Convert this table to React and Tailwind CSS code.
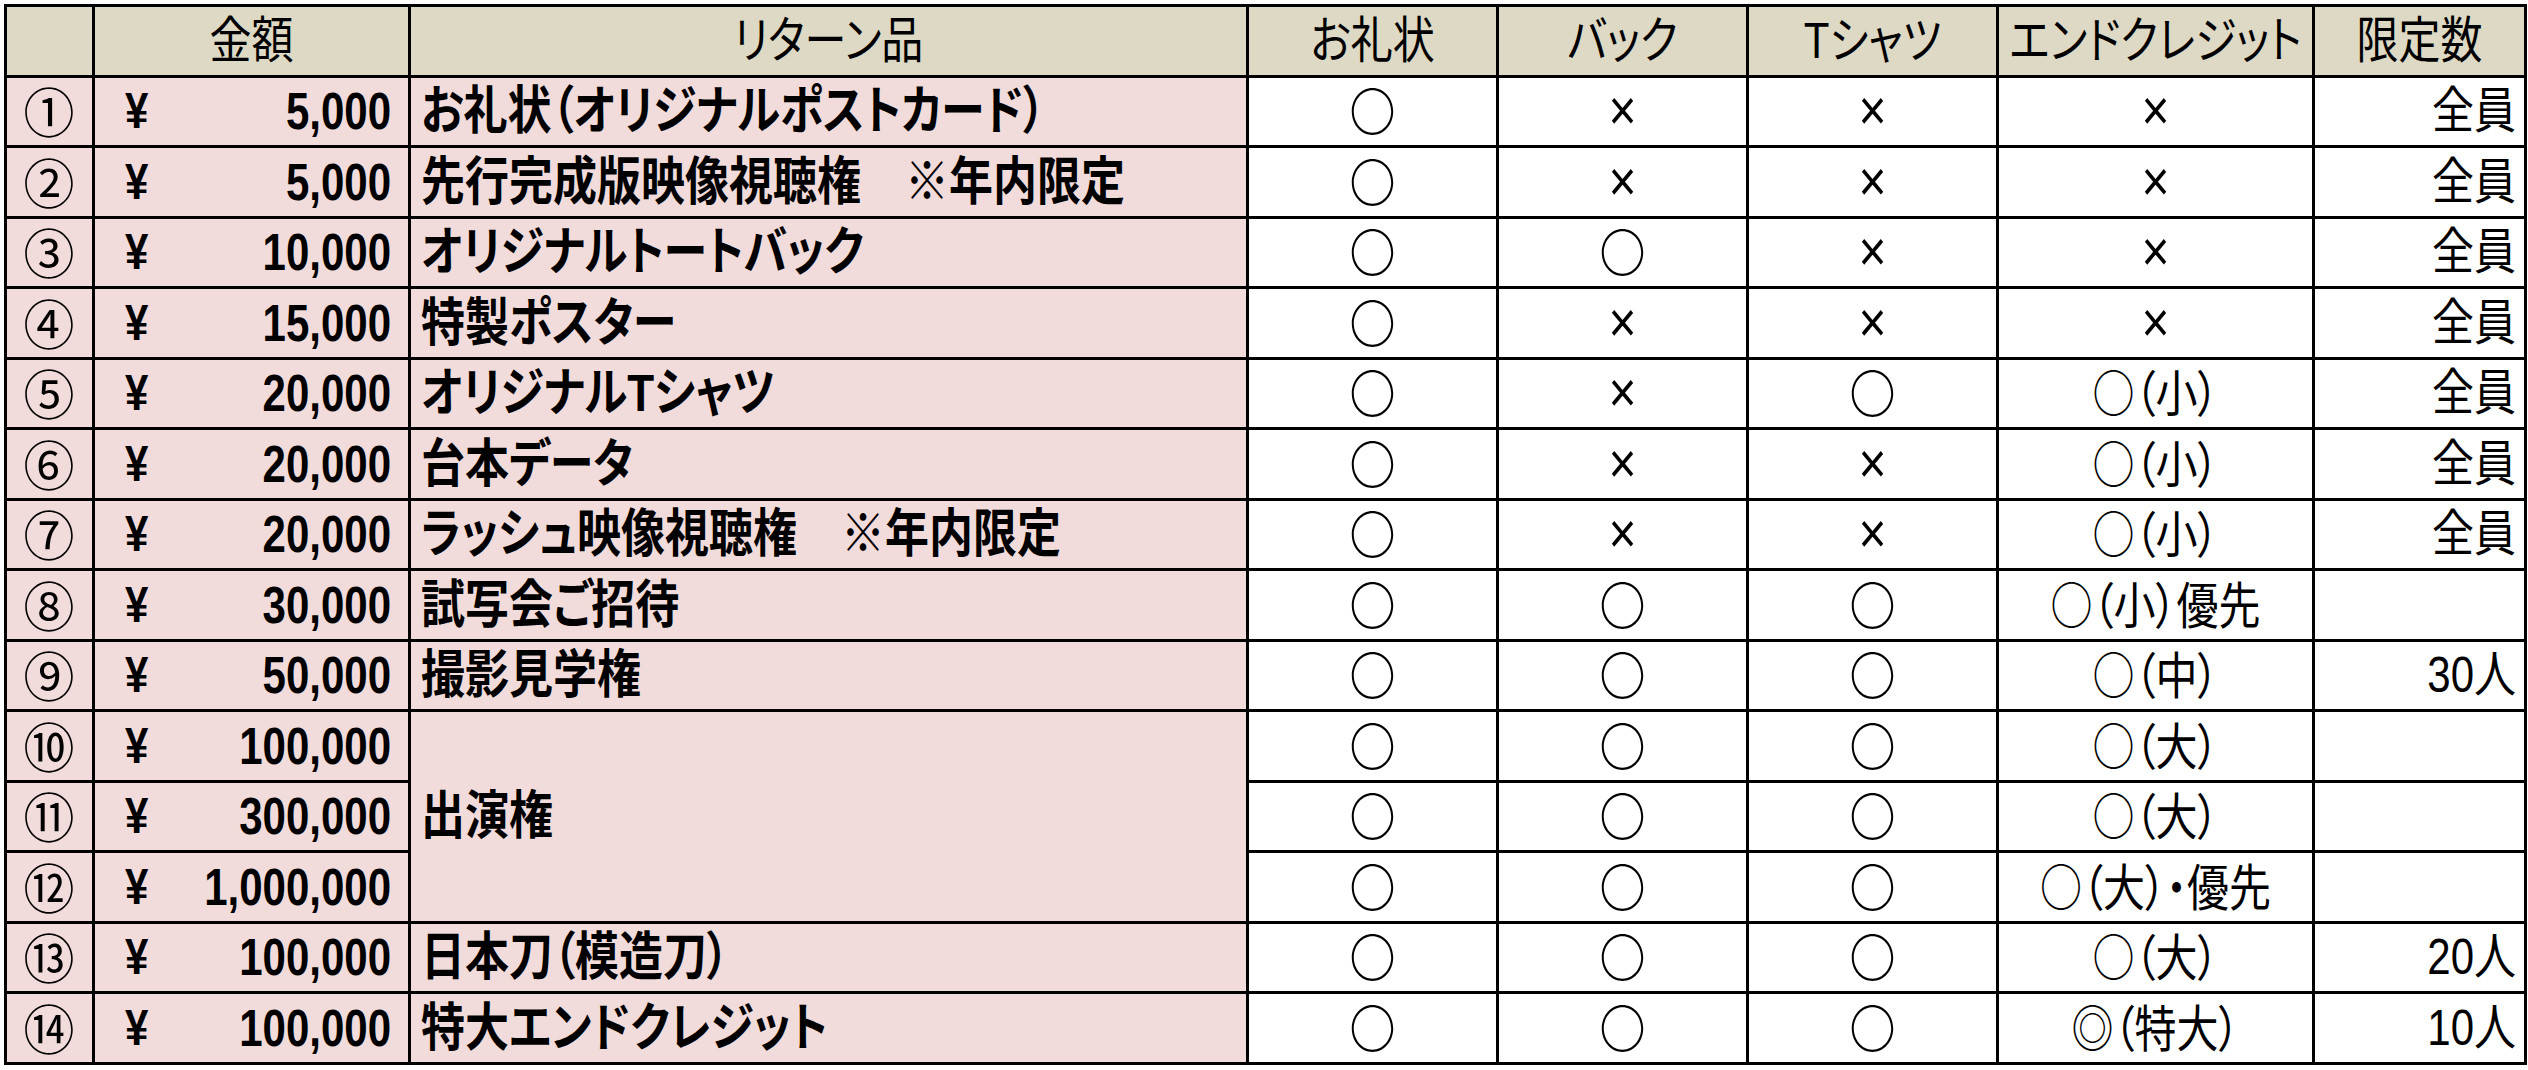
import React from 'react';

const HEADERS = ['', '金額', 'リターン品', 'お礼状', 'バック', 'Tシャツ', 'エンドクレジット', '限定数'];

const ROWS = [
  { no: '①', amount: '5,000', item: 'お礼状（オリジナルポストカード）', card: '○', bag: '×', shirt: '×', credit: '×', limit: '全員' },
  { no: '②', amount: '5,000', item: '先行完成版映像視聴権　※年内限定', card: '○', bag: '×', shirt: '×', credit: '×', limit: '全員' },
  { no: '③', amount: '10,000', item: 'オリジナルトートバック', card: '○', bag: '○', shirt: '×', credit: '×', limit: '全員' },
  { no: '④', amount: '15,000', item: '特製ポスター', card: '○', bag: '×', shirt: '×', credit: '×', limit: '全員' },
  { no: '⑤', amount: '20,000', item: 'オリジナルTシャツ', card: '○', bag: '×', shirt: '○', credit: '○（小）', limit: '全員' },
  { no: '⑥', amount: '20,000', item: '台本データ', card: '○', bag: '×', shirt: '×', credit: '○（小）', limit: '全員' },
  { no: '⑦', amount: '20,000', item: 'ラッシュ映像視聴権　※年内限定', card: '○', bag: '×', shirt: '×', credit: '○（小）', limit: '全員' },
  { no: '⑧', amount: '30,000', item: '試写会ご招待', card: '○', bag: '○', shirt: '○', credit: '○（小）優先', limit: '' },
  { no: '⑨', amount: '50,000', item: '撮影見学権', card: '○', bag: '○', shirt: '○', credit: '○（中）', limit: '30人' },
  { no: '⑩', amount: '100,000', item: '出演権', span: 3, card: '○', bag: '○', shirt: '○', credit: '○（大）', limit: '' },
  { no: '⑪', amount: '300,000', item: null, card: '○', bag: '○', shirt: '○', credit: '○（大）', limit: '' },
  { no: '⑫', amount: '1,000,000', item: null, card: '○', bag: '○', shirt: '○', credit: '○（大）・優先', limit: '' },
  { no: '⑬', amount: '100,000', item: '日本刀（模造刀）', card: '○', bag: '○', shirt: '○', credit: '○（大）', limit: '20人' },
  { no: '⑭', amount: '100,000', item: '特大エンドクレジット', card: '○', bag: '○', shirt: '○', credit: '◎（特大）', limit: '10人' },
];

const cell = 'border-[3px] border-black p-0';
const pink = 'bg-[#f2dcdb]';

// stretched text: the sheet's font is taller than it is wide
function T({ children, className = 'scale-y-[1.18]' }) {
  return <span className={`inline-block ${className}`}>{children}</span>;
}

function Mark({ v }) {
  if (v === '×') return <T className="scale-y-[1.18] font-['Liberation_Sans',sans-serif] text-[48px]">×</T>;
  if (v === '○') return <T className="scale-y-[1.12] font-['Noto_Sans_CJK_JP',sans-serif] text-[46px] font-bold">○</T>;
  return <T className="scale-y-[1.18] font-['Noto_Sans_CJK_JP',sans-serif]">{v}</T>;
}

export default function App() {
  return (
    <div className="min-h-screen bg-white pl-[4px] pt-[4px] text-black font-['Liberation_Sans','Noto_Sans_CJK_JP',sans-serif] [font-feature-settings:'palt']">
      <table className="border-collapse table-fixed w-[2520px]">
        <colgroup>
          <col className="w-[88px]" />
          <col className="w-[316px]" />
          <col className="w-[838px]" />
          <col className="w-[250px]" />
          <col className="w-[250px]" />
          <col className="w-[250px]" />
          <col className="w-[316px]" />
          <col className="w-[212px]" />
        </colgroup>
        <thead>
          <tr className="h-[70.5px] bg-[#ddd9c4] text-[42px] leading-none">
            {HEADERS.map((h, i) => (
              <th key={i} className={`${cell} font-normal text-center`}><T>{h}</T></th>
            ))}
          </tr>
        </thead>
        <tbody>
          {ROWS.map(r => (
            <tr key={r.no} className="h-[70.5px] text-[42px] leading-none">
              <td className={`${cell} ${pink} text-center font-['Noto_Sans_CJK_JP',sans-serif] text-[52px]`}>
                <T className="scale-x-[0.98] scale-y-[1.02]">{r.no}</T>
              </td>
              <td className={`${cell} ${pink} font-bold`}>
                <div className="flex justify-between pl-[30px] pr-[17px]">
                  <T>¥</T>
                  <T className="scale-y-[1.25]">{r.amount}</T>
                </div>
              </td>
              {r.item !== null && (
                <td rowSpan={r.span || 1} className={`${cell} ${pink} font-bold text-[44px] pl-[10px] whitespace-nowrap`}>
                  <T>{r.item}</T>
                </td>
              )}
              <td className={`${cell} text-center`}><Mark v={r.card} /></td>
              <td className={`${cell} text-center`}><Mark v={r.bag} /></td>
              <td className={`${cell} text-center`}><Mark v={r.shirt} /></td>
              <td className={`${cell} text-center`}><Mark v={r.credit} /></td>
              <td className={`${cell} text-right pr-[8px]`}><T>{r.limit}</T></td>
            </tr>
          ))}
        </tbody>
      </table>
    </div>
  );
}
